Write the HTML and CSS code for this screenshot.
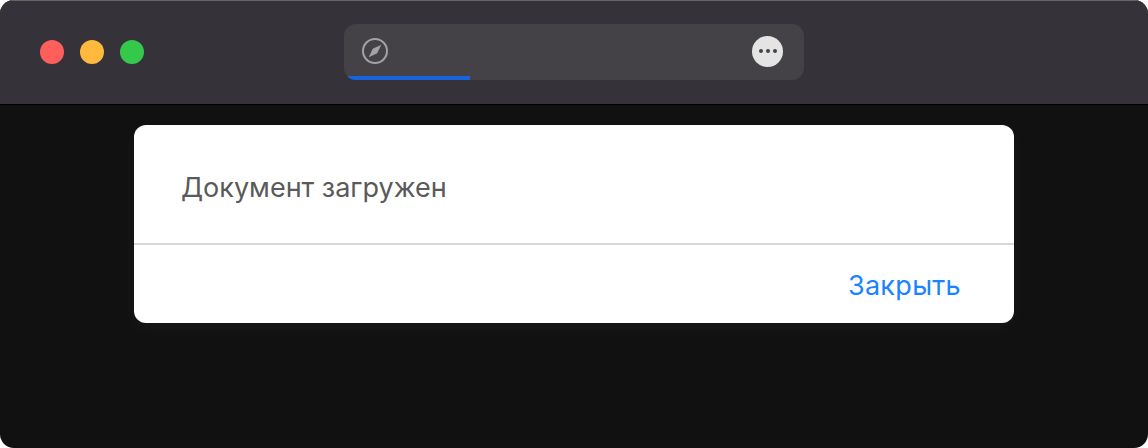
FILE: index.html
```html
<!DOCTYPE html>
<html lang="en">
<head>
    <meta charset="UTF-8">
    <meta name="viewport" content="width=device-width, initial-scale=1.0">
    <title>Документ загружен</title>
    <link rel="stylesheet" href="styles.css">
</head>
<body>

    <div class="window">
        <!-- Title bar -->
        <div class="titlebar">
            <div class="lights">
                <span class="light red"></span>
                <span class="light yellow"></span>
                <span class="light green"></span>
            </div>
            <div class="address">
                <svg class="compass" width="26" height="26" viewBox="0 0 26 26">
                    <circle cx="13" cy="13" r="12" fill="none" stroke="#a3a2a5" stroke-width="2"/>
                    <path d="M19.3 6.7 L15.2 15.2 L6.7 19.3 L10.8 10.8 Z" fill="#a3a2a5"/>
                </svg>
                <button class="more"><i></i><i></i><i></i></button>
                <div class="progress"></div>
            </div>
        </div>

        <!-- Dialog -->
        <div class="dialog">
            <div class="message">Документ загружен</div>
            <div class="actions">
                <a class="close-link">Закрыть</a>
            </div>
        </div>
    </div>

</body>
</html>
```

FILE: styles.css
```css
/* General styling */
html, body {
    height: 100%;
}

body {
    margin: 0;
    background: #ffffff;
    font-family: 'Inter', 'Noto Sans', sans-serif;
    overflow: hidden;
}

.window {
    height: 448px;
    background: #111111;
    border-radius: 14px;
    overflow: hidden;
}

/* Title bar */
.titlebar {
    display: flex;
    align-items: center;
    box-sizing: border-box;
    height: 105px;
    padding: 0 0 0 40px;
    background: #353339;
    border-top: 1px solid #68666b;
    border-bottom: 1px solid #000000;
}

.lights {
    display: flex;
    gap: 16px;
    margin-top: -2px;
}

.light {
    width: 24px;
    height: 24px;
    border-radius: 50%;
}

.red {
    background: #ff5f5b;
}

.yellow {
    background: #ffba3e;
}

.green {
    background: #35c94b;
}

.address {
    position: relative;
    display: flex;
    align-items: center;
    justify-content: space-between;
    box-sizing: border-box;
    width: 460px;
    height: 56px;
    margin-left: 200px;
    margin-top: -2px;
    padding: 0 21px 0 18px;
    background: #444247;
    border-radius: 12px;
    overflow: hidden;
}

.compass {
    margin-top: -2px;
}

.more {
    display: flex;
    align-items: center;
    justify-content: center;
    gap: 3px;
    width: 31px;
    height: 31px;
    margin-top: -1px;
    padding: 0;
    background: #e4e4e4;
    border: none;
    border-radius: 50%;
}

.more i {
    width: 4px;
    height: 4px;
    background: #444247;
    border-radius: 50%;
}

.progress {
    position: absolute;
    left: 4px;
    bottom: 0;
    width: 122px;
    height: 4px;
    background: #1664de;
}

/* Dialog */
.dialog {
    width: 880px;
    height: 198px;
    margin: 20px auto 0;
    background: #ffffff;
    border-radius: 12px;
    box-shadow: 0 6px 20px rgba(255, 255, 255, 0.03);
}

.message {
    box-sizing: border-box;
    height: 120px;
    padding: 47px 47px 0;
    font-size: 27px;
    line-height: 32px;
    color: #5a5a5a;
    border-bottom: 2px solid #d8d8d8;
}

.actions {
    display: flex;
    justify-content: flex-end;
    padding: 25px 53px 0 0;
}

.close-link {
    font-size: 27px;
    line-height: 32px;
    letter-spacing: 0.3px;
    color: #1a84ff;
}
```
